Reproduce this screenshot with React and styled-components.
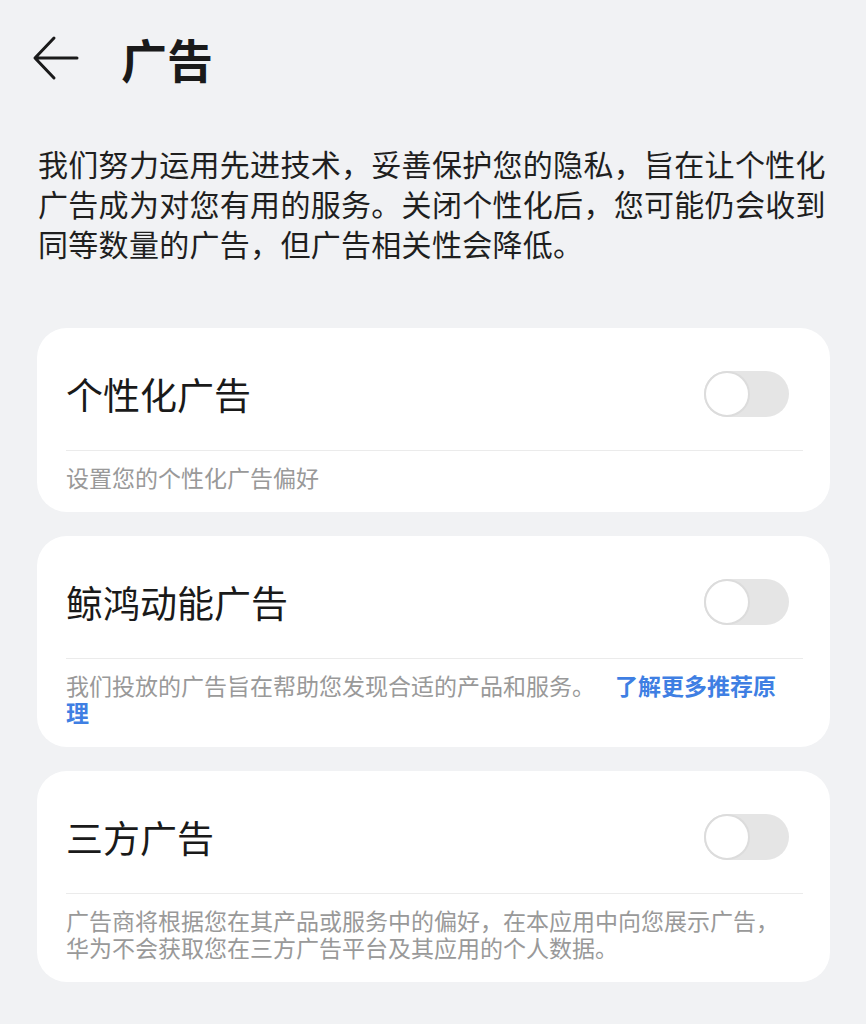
import React from 'react';
import styled, { createGlobalStyle } from 'styled-components';

const GlobalStyle = createGlobalStyle`
  html, body {
    margin: 0;
    padding: 0;
    background: #f1f2f4;
  }
  body {
    font-family: "Noto Sans CJK SC", "Noto Sans", sans-serif;
    color: #1c1c1c;
  }
`;

const Page = styled.div`
  width: 866px;
  min-height: 1024px;
  padding: 0 36px 0 37px;
  box-sizing: border-box;
  background: #f1f2f4;
`;

const Header = styled.div`
  height: 116px;
  display: flex;
  align-items: center;
  gap: 40px;
  margin-left: -6px;
`;

const BackButton = styled.button`
  width: 50px;
  height: 50px;
  padding: 0;
  border: none;
  background: none;
  display: flex;
  align-items: center;
  justify-content: center;
  color: #1a1a1a;
`;

const Title = styled.h1`
  margin: 0;
  font-size: 46px;
  font-weight: 700;
  line-height: 1;
  color: #1a1a1a;
`;

const Intro = styled.p`
  margin: 27px 0 0 1px;
  font-size: 30px;
  letter-spacing: 0.3px;
  line-height: 40px;
  color: #1f1f1f;
`;

const CardList = styled.div`
  margin-top: 65px;
  display: flex;
  flex-direction: column;
  gap: 24px;
`;

const Card = styled.section`
  background: #ffffff;
  border-radius: 30px;
  padding: 10px 27px 21px 29px;
`;

const Row = styled.div`
  height: 112px;
  display: flex;
  align-items: center;
  justify-content: space-between;
  border-bottom: 1px solid #ebebeb;
`;

const CardTitle = styled.div`
  font-size: 37px;
  font-weight: 400;
  color: #1a1a1a;
`;

const Toggle = styled.div`
  position: relative;
  width: 85px;
  height: 46px;
  margin-right: 14px;
  border-radius: 23px;
  background: #e5e5e5;
`;

const Knob = styled.span`
  position: absolute;
  left: 0;
  top: 0;
  width: 46px;
  height: 46px;
  box-sizing: border-box;
  border-radius: 50%;
  background: #ffffff;
  border: 2px solid #dcdcdc;
`;

const Desc = styled.p`
  margin: 13px 0 0;
  width: 720px;
  font-size: 23px;
  line-height: 27px;
  color: #999999;
`;

const Link = styled.a`
  margin-left: 20px;
  color: #3f7fe3;
  font-weight: 700;
  text-decoration: none;
`;

function BackArrow() {
  return (
    <svg width="48" height="48" viewBox="0 0 48 48" fill="none">
      <path
        d="M45 24H4M22 4L3 24l19 20"
        stroke="currentColor"
        strokeWidth="3"
        strokeLinecap="round"
        strokeLinejoin="round"
      />
    </svg>
  );
}

function SettingCard({ title, children }) {
  return (
    <Card>
      <Row>
        <CardTitle>{title}</CardTitle>
        <Toggle>
          <Knob />
        </Toggle>
      </Row>
      <Desc>{children}</Desc>
    </Card>
  );
}

export default function App() {
  return (
    <Page lang="zh-CN">
      <GlobalStyle />
      <Header>
        <BackButton>
          <BackArrow />
        </BackButton>
        <Title>广告</Title>
      </Header>
      <Intro>
        我们努力运用先进技术，妥善保护您的隐私，旨在让个性化广告成为对您有用的服务。关闭个性化后，您可能仍会收到同等数量的广告，但广告相关性会降低。
      </Intro>
      <CardList>
        <SettingCard title="个性化广告">设置您的个性化广告偏好</SettingCard>
        <SettingCard title="鲸鸿动能广告">
          我们投放的广告旨在帮助您发现合适的产品和服务。
          <Link href="#">了解更多推荐原理</Link>
        </SettingCard>
        <SettingCard title="三方广告">
          广告商将根据您在其产品或服务中的偏好，在本应用中向您展示广告，华为不会获取您在三方广告平台及其应用的个人数据。
        </SettingCard>
      </CardList>
    </Page>
  );
}
